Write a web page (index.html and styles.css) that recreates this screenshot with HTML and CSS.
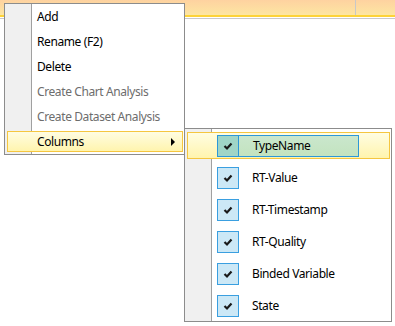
FILE: index.html
```html
<!DOCTYPE html>
<html lang="en">
<head>
  <meta charset="UTF-8">
  <title>Context Menu</title>
  <link rel="stylesheet" href="styles.css">
</head>
<body>
<div class="grid">
  <!-- Cabecera de la rejilla -->
  <div class="grid-head">
    <div class="head-cell head-wide"></div>
    <div class="head-cell"></div>
  </div>
</div>

<!-- Menu principal -->
<div class="menu main-menu">
  <div class="menu-item"><div class="item-box">Add</div></div>
  <div class="menu-item"><div class="item-box">Rename (F2)</div></div>
  <div class="menu-item"><div class="item-box">Delete</div></div>
  <div class="menu-item disabled"><div class="item-box">Create Chart Analysis</div></div>
  <div class="menu-item disabled"><div class="item-box">Create Dataset Analysis</div></div>
  <div class="menu-item active">
    <div class="item-box">
      <span class="item-label">Columns</span>
      <span class="arrow"></span>
    </div>
  </div>
</div>

<!-- Submenu columnas -->
<div class="menu sub-menu">
  <div class="sub-item active">
    <div class="sub-box">
      <span class="check"><svg width="12" height="10" viewBox="0 0 12 10"><path d="M2.5 5 L5 7.5 L9.5 2.5" fill="none" stroke="#1a1a1a" stroke-width="2.2"/></svg></span>
      <span class="sub-text">TypeName</span>
    </div>
  </div>
  <div class="sub-item">
    <div class="sub-box">
      <span class="check"><svg width="12" height="10" viewBox="0 0 12 10"><path d="M2.5 5 L5 7.5 L9.5 2.5" fill="none" stroke="#1a1a1a" stroke-width="2.2"/></svg></span>
      <span class="sub-text">RT-Value</span>
    </div>
  </div>
  <div class="sub-item">
    <div class="sub-box">
      <span class="check"><svg width="12" height="10" viewBox="0 0 12 10"><path d="M2.5 5 L5 7.5 L9.5 2.5" fill="none" stroke="#1a1a1a" stroke-width="2.2"/></svg></span>
      <span class="sub-text">RT-Timestamp</span>
    </div>
  </div>
  <div class="sub-item">
    <div class="sub-box">
      <span class="check"><svg width="12" height="10" viewBox="0 0 12 10"><path d="M2.5 5 L5 7.5 L9.5 2.5" fill="none" stroke="#1a1a1a" stroke-width="2.2"/></svg></span>
      <span class="sub-text">RT-Quality</span>
    </div>
  </div>
  <div class="sub-item">
    <div class="sub-box">
      <span class="check"><svg width="12" height="10" viewBox="0 0 12 10"><path d="M2.5 5 L5 7.5 L9.5 2.5" fill="none" stroke="#1a1a1a" stroke-width="2.2"/></svg></span>
      <span class="sub-text">Binded Variable</span>
    </div>
  </div>
  <div class="sub-item">
    <div class="sub-box">
      <span class="check"><svg width="12" height="10" viewBox="0 0 12 10"><path d="M2.5 5 L5 7.5 L9.5 2.5" fill="none" stroke="#1a1a1a" stroke-width="2.2"/></svg></span>
      <span class="sub-text">State</span>
    </div>
  </div>
</div>
</body>
</html>
```

FILE: styles.css
```css
body {
  margin: 0;
  background: #ffffff;
  font-family: "Noto Sans", "Open Sans", sans-serif;
  font-size: 12px;
  letter-spacing: -0.4px;
  color: #000;
}

.grid {
  height: 326px;
}

.grid-head {
  display: flex;
  height: 15px;
  background: linear-gradient(#fed2a0, #fde6a2);
  border-bottom: 2px solid #fdd338;
  box-shadow: 0 1px 0 #ffffff, 0 2px 0 #c9c9c9;
}

.head-cell {
  flex: 1;
}

.head-wide {
  flex: 0 0 355px;
  border-right: 1px solid #c8c8c8;
}

.menu {
  position: absolute;
  box-sizing: border-box;
  border: 1px solid #8c8c8c;
  background: #ffffff;
}

/* Menu principal */
.main-menu {
  left: 4px;
  top: 3px;
  width: 181px;
  height: 152px;
  background: linear-gradient(to right, #f0f0f0 0, #f0f0f0 26px, #a0a0a0 26px, #a0a0a0 27px, #ffffff 27px);
}

.menu-item {
  height: 25px;
  padding: 2px 1px 2px 2px;
  box-sizing: border-box;
}

.item-box {
  height: 21px;
  box-sizing: border-box;
  border: 1px solid transparent;
  padding-left: 29px;
  display: flex;
  align-items: center;
  white-space: nowrap;
}

.menu-item.disabled {
  color: #6d6d6d;
}

.menu-item.active .item-box,
.sub-item.active .sub-box {
  border-color: #f5c640;
  background: linear-gradient(#fffde2, #fff4ae);
}

.item-label {
  flex: 1;
}

.arrow {
  width: 0;
  height: 0;
  border-top: 4px solid transparent;
  border-bottom: 4px solid transparent;
  border-left: 4px solid #000;
  margin-right: 7px;
}

/* Submenu */
.sub-menu {
  left: 184px;
  top: 128px;
  width: 208px;
  height: 194px;
  background: linear-gradient(to right, #f0f0f0 0, #f0f0f0 26px, #a0a0a0 26px, #a0a0a0 27px, #ffffff 27px);
}

.sub-item {
  height: 32px;
  padding: 3px 1px 2px 2px;
  box-sizing: border-box;
}

.sub-box {
  height: 27px;
  box-sizing: border-box;
  border: 1px solid transparent;
  padding-left: 29px;
  display: flex;
  align-items: center;
}

.check {
  width: 22px;
  height: 22px;
  box-sizing: border-box;
  border: 1px solid #3a9fe0;
  background: #cce8f6;
  display: flex;
  align-items: center;
  justify-content: center;
}

.sub-text {
  padding-left: 13px;
  white-space: nowrap;
}

.sub-item.active .check {
  background: #9fd5c7;
  border-color: #2c98d8;
}

.sub-item.active .sub-text {
  height: 22px;
  width: 121px;
  box-sizing: border-box;
  margin-left: -1px;
  padding-left: 14px;
  border: 1px solid #2c98d8;
  background: linear-gradient(#cae7cd, #c3e3bf);
  display: flex;
  align-items: center;
}
```
